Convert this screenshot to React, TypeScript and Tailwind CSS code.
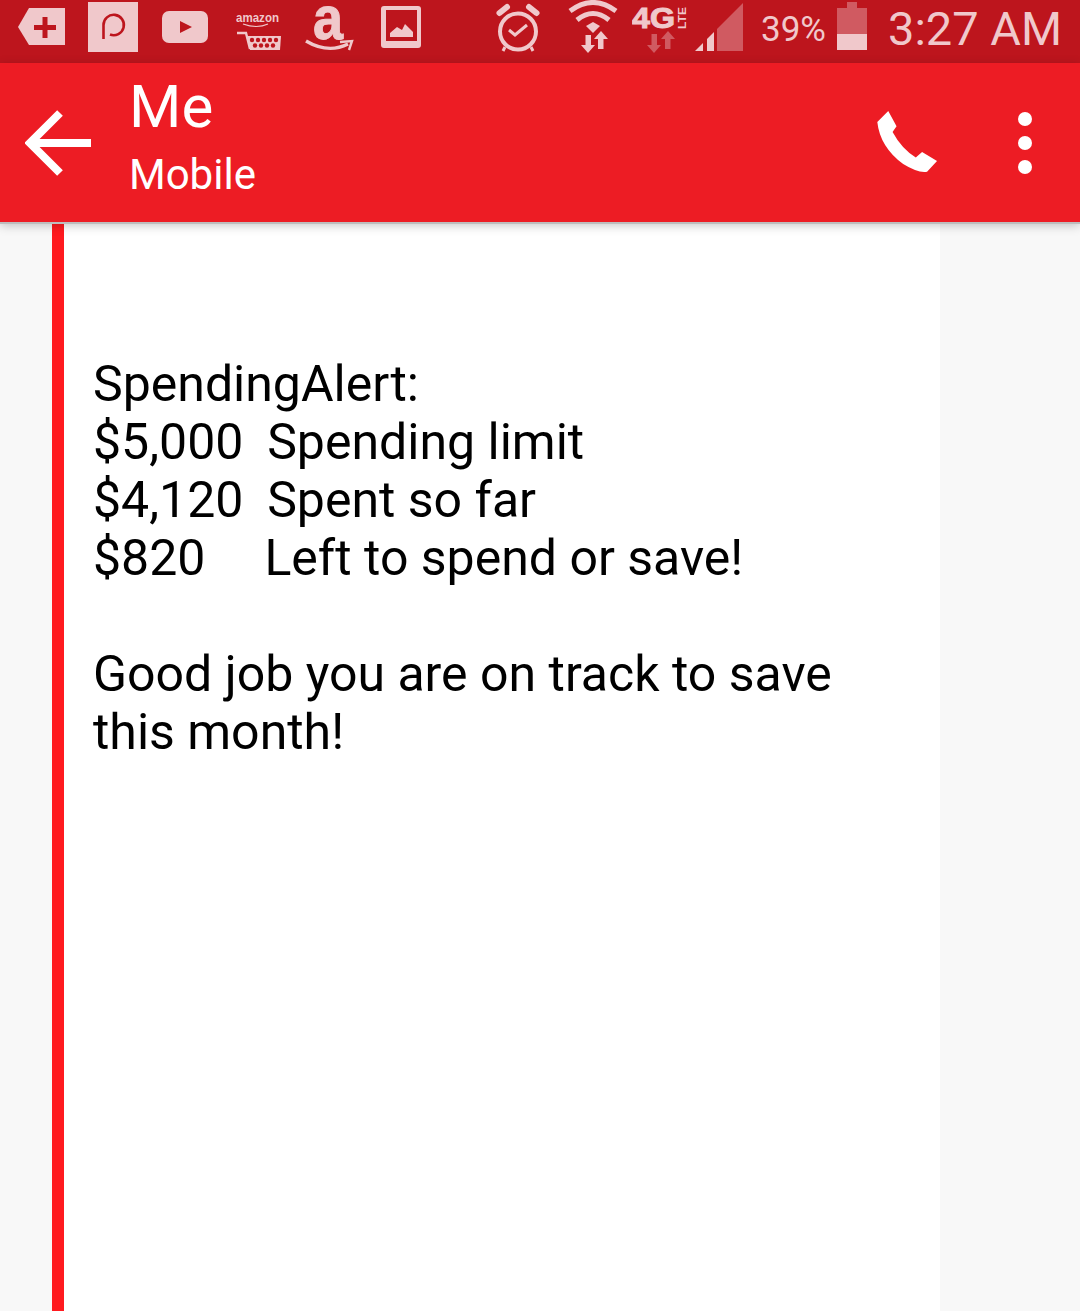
import React from 'react';

const LIGHT = '#f0c8cb';
const DIM = '#d05a61';
const BAR = '#bd151d';

// viewBox uses page coordinates, so x offsets line up with the screenshot
const Slot: React.FC<{ x: number; w: number; className?: string; children: React.ReactNode }> = ({ x, w, className, children }) => (
  <svg width={w} height={63} viewBox={`${x} 0 ${w} 63`} className={`shrink-0 ${className ?? ''}`}>
    {children}
  </svg>
);

const StatusBar: React.FC = () => (
  <div className="flex h-[63px] shrink-0 items-center bg-[#bd151d] pl-[18px] font-['Roboto',sans-serif] text-[#f0c8cb]">
    <Slot x={18} w={47}>
      <polygon points="18,27 29,8 65,8 65,45 29,45" fill={LIGHT} />
      <path d="M45 17V38M34 27.5H56" stroke={BAR} strokeWidth={5} />
    </Slot>
    <Slot x={88} w={50} className="ml-[23px]">
      <rect x={88} y={2} width={50} height={50} fill={LIGHT} />
      <path d="M103.5 39V25A10.2 10.2 0 1 1 110 34.5" fill="none" stroke={BAR} strokeWidth={2.6} />
    </Slot>
    <Slot x={162} w={47} className="ml-[24px]">
      <rect x={162} y={11} width={46} height={32} rx={7} fill={LIGHT} />
      <polygon points="180,21 192,27 180,33" fill={BAR} />
    </Slot>
    <Slot x={236} w={46} className="ml-[27px]">
      <text x={236} y={22} fontFamily="Liberation Sans, sans-serif" fontWeight={700} fontSize={12} textLength={43} lengthAdjust="spacingAndGlyphs" fill={LIGHT}>amazon</text>
      <path d="M243 24Q257 29 268 24" fill="none" stroke={LIGHT} strokeWidth={1.2} />
      <path d="M237 33H246L250 49" fill="none" stroke={LIGHT} strokeWidth={2.4} />
      <polygon points="247,36 281,36 280,50 250,50" fill={LIGHT} />
      {[252, 258, 264, 270, 276].map((cx) => (
        <circle key={cx} cx={cx} cy={40} r={2.2} fill={BAR} />
      ))}
      {[255, 261, 267, 273].map((cx) => (
        <circle key={cx} cx={cx} cy={45.5} r={2.2} fill={BAR} />
      ))}
    </Slot>
    <Slot x={305} w={49} className="ml-[23px]">
      <text x={313} y={39} fontFamily="Liberation Sans, sans-serif" fontWeight={700} fontSize={62} textLength={30} lengthAdjust="spacingAndGlyphs" stroke={LIGHT} strokeWidth={1} fill={LIGHT}>a</text>
      <path d="M306 41Q328 54 348 44" fill="none" stroke={LIGHT} strokeWidth={3.4} />
      <path d="M340 42L352 41L349 50" fill="none" stroke={LIGHT} strokeWidth={2.4} />
    </Slot>
    <Slot x={381} w={40} className="ml-[27px]">
      <rect x={381} y={6} width={40} height={42} rx={3} fill={LIGHT} />
      <rect x={386} y={10} width={31} height={31} fill={BAR} />
      <path d="M390 37V33L397 27L402 30L405 24L413 32V37Z" fill={LIGHT} />
    </Slot>
    <Slot x={496} w={46} className="ml-[75px]">
      <circle cx={518} cy={31.5} r={18} fill="none" stroke={LIGHT} strokeWidth={4} />
      <path d="M499.5 13L507 7M536.5 13L529 7" stroke={LIGHT} strokeWidth={6} strokeLinecap="round" />
      <path d="M505 47L503 51M531 47L533 51" stroke={LIGHT} strokeWidth={3} />
      <path d="M509 30L515 35L527 25" fill="none" stroke={LIGHT} strokeWidth={3} />
    </Slot>
    <Slot x={568} w={50} className="ml-[26px]">
      <path d="M570 11Q593 -6 616 11" fill="none" stroke={LIGHT} strokeWidth={5} />
      <path d="M577 20Q593 7 609 20" fill="none" stroke={LIGHT} strokeWidth={5} />
      <polygon points="586,26 593,22 600,26 593,33" fill={LIGHT} />
      <path d="M585.5 35H591V45H595L588 53L581 45H585.5Z" fill={LIGHT} />
      <path d="M598 49H603.5V39H608L601 31L594 39H598Z" fill={LIGHT} />
    </Slot>
    <Slot x={632} w={56} className="ml-[14px]">
      <text x={632} y={28} fontFamily="Liberation Sans, sans-serif" fontWeight={700} fontSize={29} textLength={43} lengthAdjust="spacingAndGlyphs" stroke={LIGHT} strokeWidth={1} fill={LIGHT}>4G</text>
      <text transform="translate(686 29) rotate(-90)" fontFamily="Liberation Sans, sans-serif" fontWeight={700} fontSize={11} textLength={22} lengthAdjust="spacingAndGlyphs" fill={LIGHT}>LTE</text>
      <path d="M651.5 34H657V45H661L654 53L647 45H651.5Z" fill={DIM} />
      <path d="M665 49H670.5V39H675L668 31L661 39H665Z" fill={DIM} />
    </Slot>
    <Slot x={695} w={48} className="ml-[7px]">
      <polygon points="695,51 703,51 703,43" fill={LIGHT} />
      <polygon points="707,51 714,51 714,32 707,39" fill={LIGHT} />
      <polygon points="717,51 743,51 743,3 717,29" fill={DIM} />
    </Slot>
    <span className="mb-[4px] ml-[18px] w-[66px] whitespace-nowrap text-[35px] leading-none">39%</span>
    <Slot x={837} w={30} className="ml-[10px]">
      <rect x={847} y={2} width={10} height={6} fill={DIM} />
      <rect x={837} y={8} width={30} height={26} fill={DIM} />
      <rect x={837} y={34} width={30} height={16} fill={LIGHT} />
    </Slot>
    <span className="mb-[6px] ml-[21px] whitespace-nowrap text-[47px] leading-none">3:27 AM</span>
  </div>
);

const Header: React.FC = () => (
  <div className="relative z-10 flex h-[159px] shrink-0 items-center bg-[#ed1c24] font-['Roboto',sans-serif] text-white shadow-[0_2px_0_#bdbdbd,0_3px_10px_rgba(0,0,0,0.25)]">
    <svg width={67} height={66} viewBox="25 110 67 66" className="ml-[25px] shrink-0">
      <path d="M91 143H31M60 113L30 143L60 173" fill="none" stroke="#fff" strokeWidth={8} />
    </svg>
    <div className="ml-[37px] flex flex-col self-start pt-[9px]">
      <span className="mb-[9px] text-[60px] leading-[70px]">Me</span>
      <span className="text-[42px] leading-[48px]">Mobile</span>
    </div>
    <svg width={67} height={68} viewBox="100 50 200 205" className="mb-[3px] ml-auto shrink-0">
      <path d="M145 62L170 108L158 125Q185 175 228 202L247 186L292 213L262 245Q235 250 190 222Q120 170 112 95Z" fill="#fff" />
    </svg>
    <div className="ml-[78px] mr-[48px] flex flex-col gap-[10px]">
      <span className="h-[14px] w-[14px] rounded-full bg-white" />
      <span className="h-[14px] w-[14px] rounded-full bg-white" />
      <span className="h-[14px] w-[14px] rounded-full bg-white" />
    </div>
  </div>
);

const App: React.FC = () => {
  return (
    <div className="flex h-[1311px] w-[1080px] flex-col overflow-hidden bg-[#f8f8f8]">
      <StatusBar />
      <Header />
      <div className="flex min-h-0 flex-1">
        <div className="ml-[52px] mt-[2px] w-[12px] bg-[#ff1a1f]" />
        <div className="w-[876px] bg-white pl-[29px] pr-[60px] pt-[133px] font-['Roboto',sans-serif] text-[50px] leading-[58px] text-black">
          <div>SpendingAlert:</div>
          <div className="whitespace-pre">$5,000  <span className="-ml-[1px]">Spending limit</span></div>
          <div className="whitespace-pre">$4,120  <span className="-ml-[1px]">Spent so far</span></div>
          <div className="whitespace-pre">$820     <span className="-ml-[3px]">Left to spend or save!</span></div>
          <div className="mt-[58px]">Good job you are on track to save this month!</div>
        </div>
      </div>
    </div>
  );
};

export default App;
